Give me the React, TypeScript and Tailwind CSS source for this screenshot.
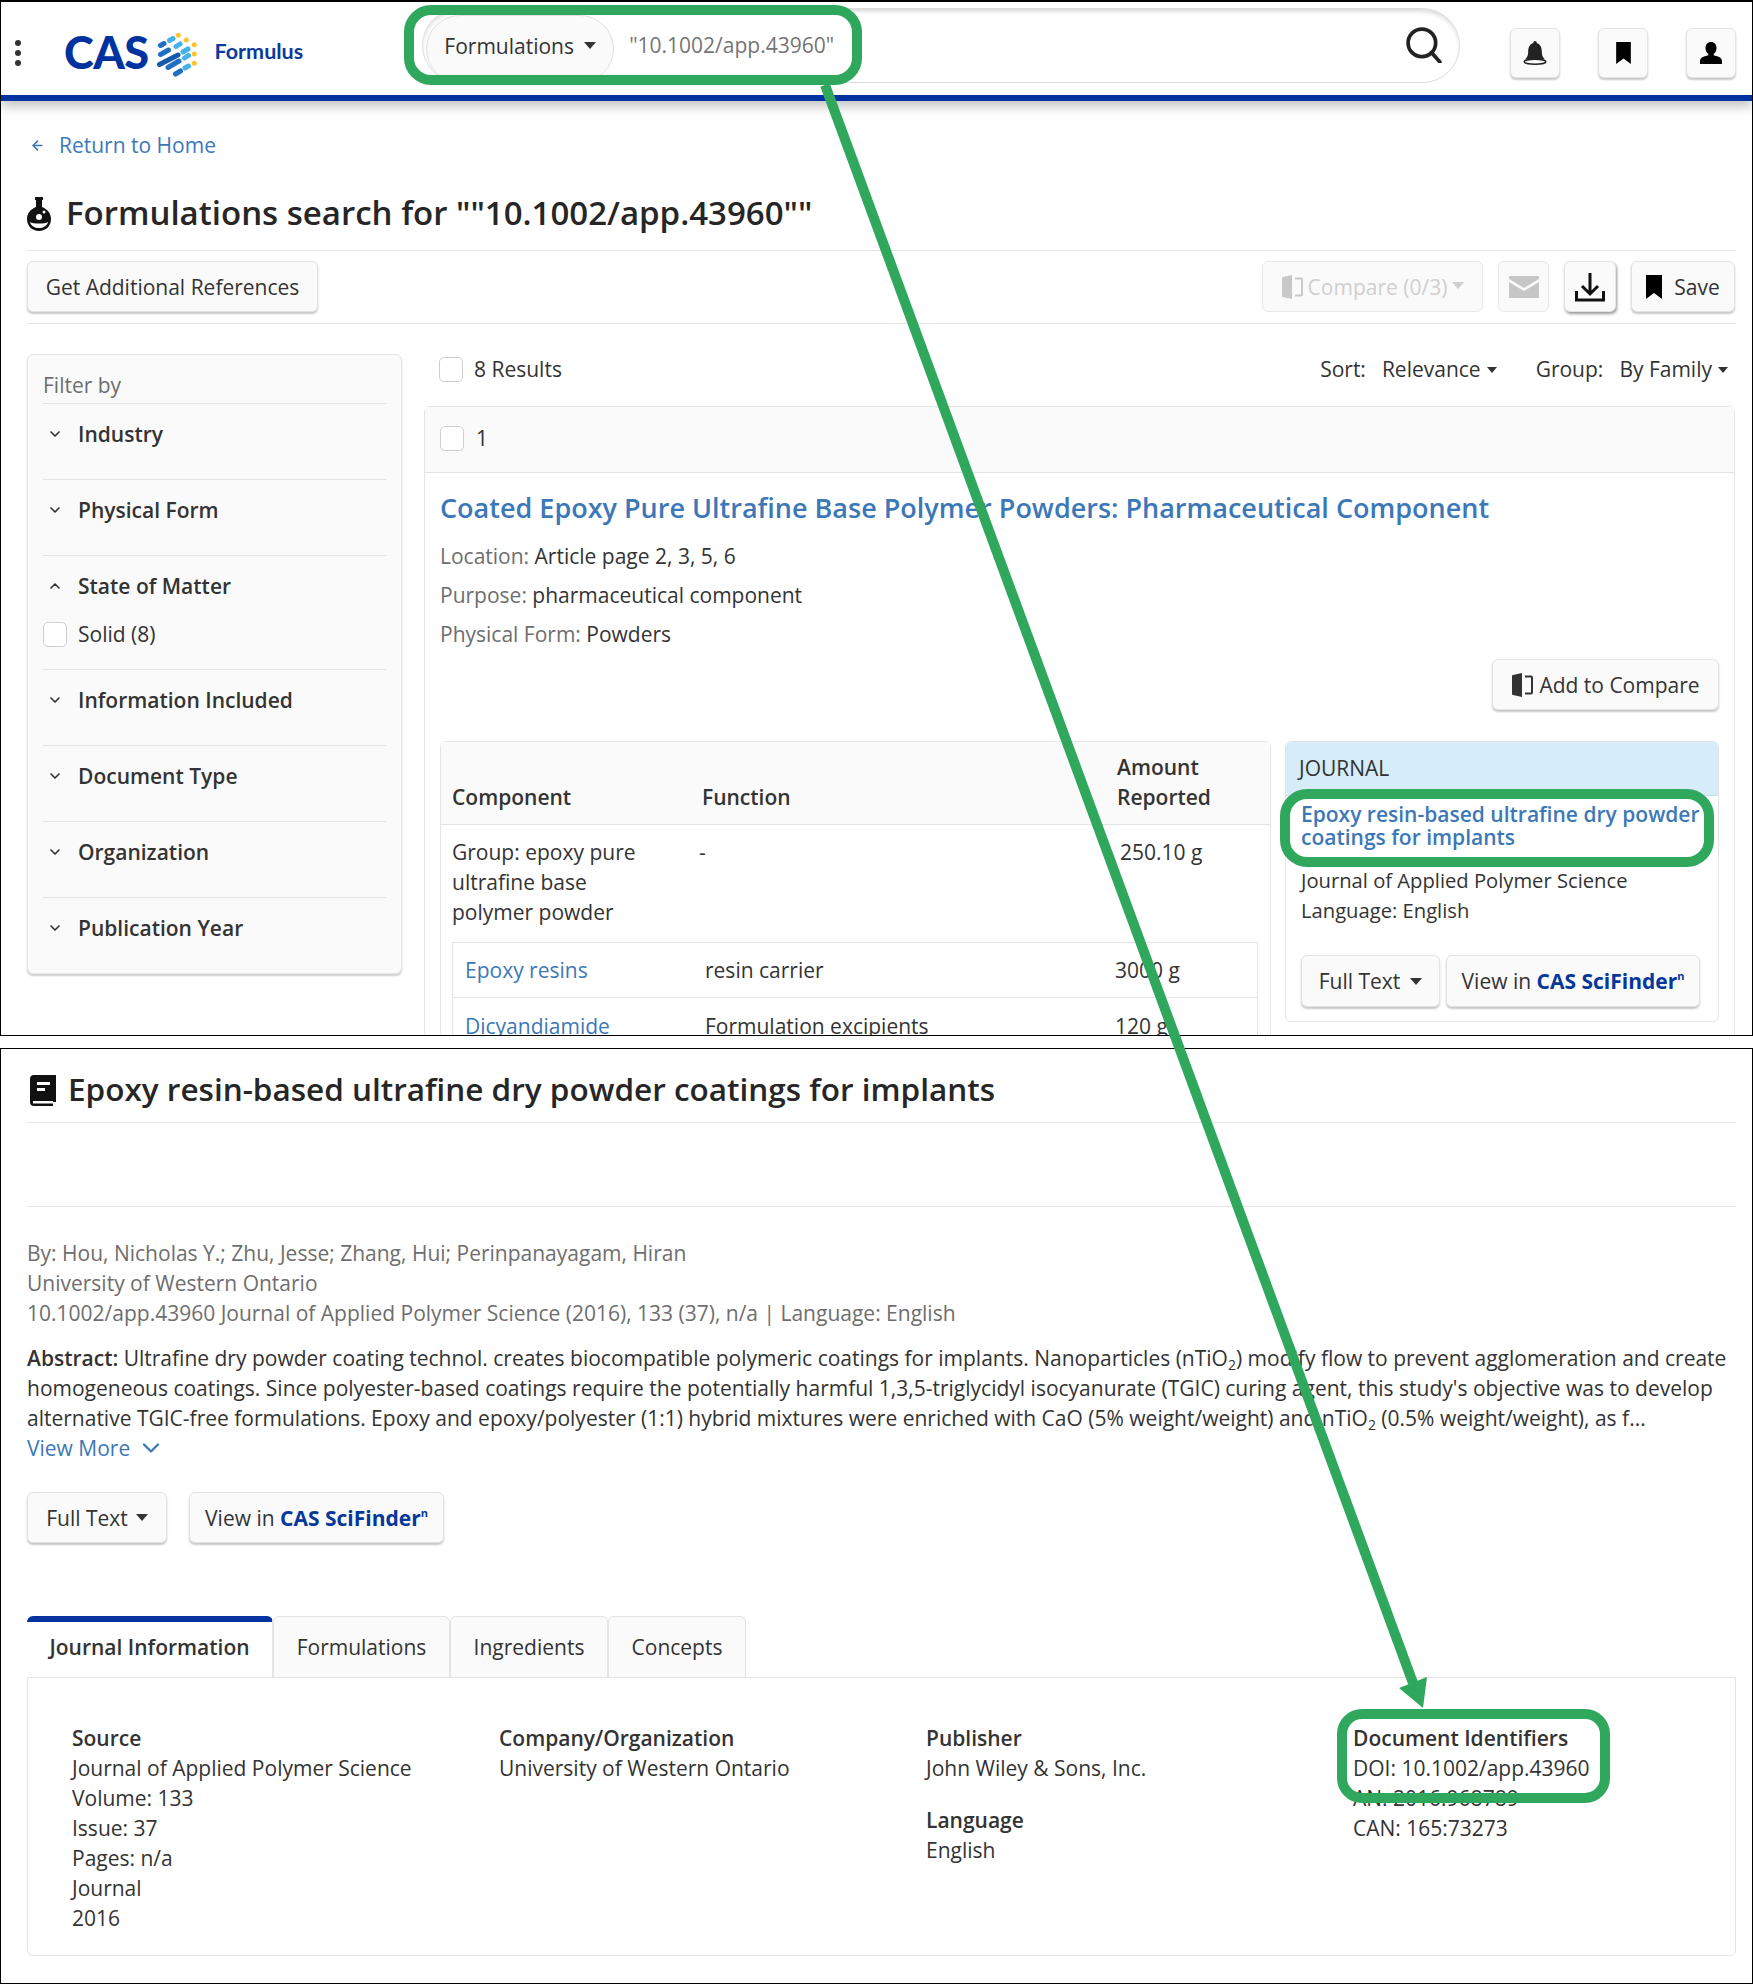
import { ArrowLeft, ChevronDown, ChevronUp } from "lucide-react";
import type { ReactNode } from "react";

const btn =
  "flex items-center justify-center rounded-[6px] border border-[#e3e3e3] bg-[#fafafa] shadow-[0_2px_2px_rgba(0,0,0,0.22)]";

function Caret({ className = "" }: { className?: string }) {
  return (
    <svg viewBox="0 0 12 7" className={`h-[7px] w-[12px] fill-current ${className}`}>
      <path d="M0 0h12L6 7z" />
    </svg>
  );
}

function Check({ className = "" }: { className?: string }) {
  return <span className={`block h-[25px] w-[24px] rounded-[5px] border border-[#cfcfcf] bg-white ${className}`} />;
}

function BookmarkIcon({ className = "" }: { className?: string }) {
  return (
    <svg viewBox="0 0 16 24" className={`fill-black ${className}`}>
      <path d="M0 0h16v24l-8-6-8 6z" />
    </svg>
  );
}

function CompareIcon({ className = "" }: { className?: string }) {
  return (
    <svg viewBox="0 0 24 24" className={`fill-current ${className}`}>
      <path d="M11 0v24L2 22a1 1 0 0 1-1-1V3a1 1 0 0 1 1-1z" />
      <path d="M14 2.5h6a2 2 0 0 1 2 2v15a2 2 0 0 1-2 2h-6v-2h6v-15h-6z" />
    </svg>
  );
}

function ScifinderButton({ className }: { className: string }) {
  return (
    <div className={`${btn} ${className}`}>
      View in&nbsp;<b className="font-bold text-[#06379a]">CAS SciFinder</b>
      <sup className="text-[11px] leading-none font-bold text-[#06379a]">n</sup>
    </div>
  );
}

function FilterRow({ title, open, last, children }: { title: string; open?: boolean; last?: boolean; children?: ReactNode }) {
  const Icon = open ? ChevronUp : ChevronDown;
  return (
    <div className={`${children ? "h-[114px]" : "h-[76px]"} ${last ? "" : "border-b border-[#e4e4e4]"} pt-[15px]`}>
      <div className="flex items-center font-semibold">
        <Icon className="ml-[4px] mr-[15px] h-[16px] w-[16px]" strokeWidth={2.5} />
        {title}
      </div>
      {children}
    </div>
  );
}

function CasMark() {
  const dark = "#1f6fc4";
  const light = "#45b3e7";
  const yellow = "#fdc32d";
  return (
    <svg viewBox="0 0 56 56" className="h-[56px] w-[56px]" strokeLinecap="round" strokeWidth={5} fill="none">
      <path d="M9.5 19.5l3.5-2" stroke={dark} />
      <path d="M18.5 14.5l3.5-2" stroke={light} />
      <path d="M9.5 28.5l8-4.5" stroke={dark} />
      <path d="M25 20.5l4-2.5" stroke={light} />
      <path d="M8.5 38.5L27 29" stroke="#1559ad" />
      <path d="M32 26l5-3" stroke={light} />
      <path d="M17 41.5l11-6.5" stroke={dark} />
      <path d="M33.5 32l4-2.5" stroke={light} />
      <path d="M24.5 48l5-3" stroke={dark} />
      <path d="M34 42l3.5-2" stroke={light} />
      <g fill={yellow} stroke="none">
        <circle cx="27.3" cy="9.3" r="2.5" />
        <circle cx="35.3" cy="14" r="2.5" />
        <circle cx="43.3" cy="18.7" r="2.5" />
        <circle cx="43.3" cy="28" r="2.5" />
        <circle cx="43.3" cy="37.3" r="2.5" />
      </g>
    </svg>
  );
}

function Annotations() {
  return (
    <svg
      viewBox="0 0 1753 1984"
      className="pointer-events-none absolute top-0 left-0 h-[1984px] w-[1753px]"
      fill="none"
      stroke="#2fa75c"
      strokeWidth={10}
    >
      <rect x="409" y="10" width="448" height="70" rx="22" />
      <rect x="1285" y="794" width="424" height="68" rx="22" />
      <rect x="1342" y="1714" width="263" height="84" rx="20" />
      <path d="M825 85L1413 1683" />
      <path d="M1399 1688L1427 1677L1423 1708z" fill="#2fa75c" stroke="none" />
    </svg>
  );
}

function Header() {
  return (
    <header className="flex h-[99px] border-b-[6px] border-[#0033a0] shadow-[0_6px_10px_rgba(0,0,0,0.22)]">
      <div className="ml-[14px] mt-[38px] flex w-[6px] flex-col gap-[4px]">
        <span className="h-[6px] w-[6px] rounded-full bg-[#333]" />
        <span className="h-[6px] w-[6px] rounded-full bg-[#333]" />
        <span className="h-[6px] w-[6px] rounded-full bg-[#333]" />
      </div>
      <div className="ml-[43px] flex h-[93px] items-center">
        <span className="font-['Lato',sans-serif] text-[45px] leading-none font-black tracking-[-0.5px] text-[#0033a0] pt-[8px]">CAS</span>
        <div className="ml-[2px] mt-[10px]"><CasMark /></div>
        <span className="ml-[8px] mt-[5px] font-['Lato',sans-serif] text-[21.500px] font-bold text-[#0a3a9e]">Formulus</span>
      </div>
      <div className="ml-[119px] mt-[6px] flex h-[75px] w-[1038px] items-center rounded-full border border-[#dcdcdc] pl-[3px] shadow-[inset_0_4px_5px_-2px_rgba(0,0,0,0.18)]">
        <div className="flex h-[68px] w-[188px] mt-[7px] items-center justify-center gap-[10px] rounded-full border border-[#e0e0e0] bg-[#fafafa] pb-[7px]">
          Formulations <Caret />
        </div>
        <span className="ml-[15px] pb-[1px] text-[#757575]">"10.1002/app.43960"</span>
        <svg viewBox="0 0 34 34" className="ml-auto mr-[17px] mb-[2px] h-[36px] w-[36px]" fill="none" stroke="#222" strokeWidth={3.5}>
          <circle cx="15" cy="15" r="13" />
          <path d="M24 24l8 9" strokeLinecap="round" />
        </svg>
      </div>
      <div className="ml-[50px] mt-[26px] flex gap-[38px]">
        <div className={`${btn} h-[50px] w-[50px]`}>
          <svg viewBox="0 0 24 24" className="h-[26px] w-[26px]">
            <path fill="#222" d="M12 1a1.6 1.6 0 0 1 1.6 1.8C17 4 18.3 7 18.3 11c0 3 1 5 2.7 6.8H3c1.700-1.800 2.700-3.800 2.700-6.800 0-4 1.300-7 4.700-8.200A1.600 1.600 0 0 1 12 1z" />
            <ellipse cx="12" cy="20" rx="10" ry="2.300" fill="none" stroke="#222" strokeWidth="1.400" />
          </svg>
        </div>
        <div className={`${btn} h-[50px] w-[50px]`}>
          <BookmarkIcon className="h-[22px] w-[15px]" />
        </div>
        <div className={`${btn} h-[50px] w-[50px]`}>
          <svg viewBox="0 0 24 24" className="h-[24px] w-[24px] fill-black">
            <path d="M12 1c3.400 0 5.500 2.600 5.500 6 0 2.600-1 4.700-2.800 5.800v1.400c3.500 1 8.300 2 8.300 5.800v3H1v-3c0-3.800 4.800-4.800 8.300-5.800v-1.400C7.500 11.700 6.500 9.600 6.500 7 6.500 3.600 8.600 1 12 1z" />
          </svg>
        </div>
      </div>
    </header>
  );
}

function TopToolbar() {
  return (
    <div className="flex h-[73px] items-start justify-between border-b border-[#e4e4e4] pt-[10px]">
      <div className={`${btn} h-[51px] w-[291px]`}>Get Additional References</div>
      <div className="mr-px flex">
        <div className="flex h-[51px] w-[221px] items-center justify-center rounded-[6px] border border-[#e8e8e8] bg-[#fafafa] text-[#cfcfcf]">
          <CompareIcon className="mr-[3px] h-[24px] w-[24px] text-[#c8c8c8]" />
          <span>Compare (0/3)</span>
          <Caret className="ml-[5px] mb-[2px]" />
        </div>
        <div className="ml-[15px] flex h-[51px] w-[51px] items-center justify-center rounded-[6px] border border-[#e8e8e8] bg-[#fafafa]">
          <svg viewBox="0 0 30 22" className="h-[22px] w-[30px]">
            <path fill="#c6c6c6" d="M1 0h28a1 1 0 0 1 1 1v2L15 12 0 3V1a1 1 0 0 1 1-1z" />
            <path fill="#c6c6c6" d="M0 6l15 9 15-9v15a1 1 0 0 1-1 1H1a1 1 0 0 1-1-1z" />
          </svg>
        </div>
        <div className={`${btn} ml-[15px] h-[51px] w-[52px] shadow-[1px_2px_3px_rgba(0,0,0,0.4)]`}>
          <svg viewBox="0 0 30 30" className="h-[30px] w-[30px]" fill="none" stroke="#111" strokeWidth={3}>
            <path d="M15 1v21M7 14l8 8 8-8" />
            <path d="M1.500 19v9h27v-9" />
          </svg>
        </div>
        <div className={`${btn} ml-[15px] h-[51px] w-[104px] gap-[12px]`}>
          <BookmarkIcon className="h-[24px] w-[16px]" />
          Save
        </div>
      </div>
    </div>
  );
}

function Filters() {
  return (
    <aside className="h-[620px] w-[375px] shrink-0 rounded-[6px] border border-[#e6e6e6] bg-[#fafafa] px-[15px] pt-[15px] shadow-[0_2px_2px_rgba(0,0,0,0.2)]">
      <div className="h-[34px] border-b border-[#e4e4e4] text-[#6e6e6e]">Filter by</div>
      <FilterRow title="Industry" />
      <FilterRow title="Physical Form" />
      <FilterRow title="State of Matter" open>
        <div className="mt-[18px] flex items-center gap-[11px]">
          <Check />
          Solid (8)
        </div>
      </FilterRow>
      <FilterRow title="Information Included" />
      <FilterRow title="Document Type" />
      <FilterRow title="Organization" />
      <FilterRow title="Publication Year" last />
    </aside>
  );
}

function ComponentTable() {
  return (
    <div className="h-[320px] w-[831px] shrink-0 rounded-t-[6px] border border-[#e6e6e6] bg-white">
      <div className="grid h-[83px] grid-cols-[250px_415px_1fr] items-end border-b border-[#e4e4e4] bg-[#fafafa] pb-[12px] pl-[11px] font-semibold">
        <div>Component</div>
        <div>Function</div>
        <div>
          Amount
          <br />
          Reported
        </div>
      </div>
      <div className="grid grid-cols-[247px_421px_1fr] pl-[11px] pt-[12px]">
        <div>
          Group: epoxy pure
          <br />
          ultrafine base
          <br />
          polymer powder
        </div>
        <div>-</div>
        <div>250.10 g</div>
      </div>
      <div className="ml-[11px] mt-[15px] w-[806px] border border-[#e4e4e4]">
        <div className="grid h-[55px] grid-cols-[240px_410px_1fr] items-center border-b border-[#e4e4e4] pl-[12px]">
          <div className="text-[#3c78b8]">Epoxy resins</div>
          <div>resin carrier</div>
          <div>3000 g</div>
        </div>
        <div className="grid h-[55px] grid-cols-[240px_410px_1fr] items-center pl-[12px]">
          <div className="text-[#3c78b8]">Dicyandiamide</div>
          <div>Formulation excipients</div>
          <div>120 g</div>
        </div>
      </div>
    </div>
  );
}

function JournalCard() {
  return (
    <div className="ml-[14px] h-[281px] w-[434px] shrink-0 overflow-hidden rounded-[6px] border border-[#e4e4e4]">
      <div className="flex h-[54px] items-center border-b border-[#bfe2f5] bg-[#d6edf9] pb-[2px] pl-[13px]">JOURNAL</div>
      <div className="px-[15px] pt-[7px]">
        <div className="text-[#3c78b8] leading-[23px] font-semibold">
          Epoxy resin-based ultrafine dry powder
          <br />
          coatings for implants
        </div>
        <div className="mt-[16px] text-[20.200px]">Journal of Applied Polymer Science</div>
        <div className="text-[20.200px]">Language: English</div>
        <div className="mt-[30px] flex gap-[6px]">
          <div className={`${btn} h-[52px] w-[139px] gap-[10px]`}>
            Full Text <Caret />
          </div>
          <ScifinderButton className="h-[52px] w-[254px]" />
        </div>
      </div>
    </div>
  );
}

function ResultCard() {
  return (
    <div className="mt-[22px] h-[640px] rounded-t-[6px] border border-[#e6e6e6]">
      <div className="flex h-[66px] items-center gap-[12px] border-b border-[#e4e4e4] bg-[#fafafa] pl-[15px] pb-[3px]">
        <Check />1
      </div>
      <div className="pl-[15px] pr-[15px]">
        <h2 className="mt-[15px] text-[27px] leading-[40px] font-semibold text-[#3c78b8]">
          Coated Epoxy Pure Ultrafine Base Polymer Powders: Pharmaceutical Component
        </h2>
        <div className="mt-[13px] flex flex-col gap-[9px]">
          <div><span className="text-[#6e6e6e]">Location:</span> Article page 2, 3, 5, 6</div>
          <div><span className="text-[#6e6e6e]">Purpose:</span> pharmaceutical component</div>
          <div><span className="text-[#6e6e6e]">Physical Form:</span> Powders</div>
        </div>
        <div className="mt-[10px] flex justify-end">
          <div className={`${btn} h-[51px] w-[227px] gap-[4px]`}>
            <CompareIcon className="h-[24px] w-[24px]" />
            Add to Compare
          </div>
        </div>
        <div className="mt-[31px] flex">
          <ComponentTable />
          <JournalCard />
        </div>
      </div>
    </div>
  );
}

function SearchPanel() {
  return (
    <section className="h-[1036px] overflow-hidden border border-t-2 border-black">
      <Header />
      <div className="pl-[26px] pr-[16px]">
        <div className="mt-[29px] flex items-center text-[#3c78b8]">
          <ArrowLeft className="ml-[3px] mr-[14px] h-[15px] w-[15px]" strokeWidth={2.5} />
          Return to Home
        </div>
        <div className="mt-[27px] flex h-[64px] items-start border-b border-[#e4e4e4]">
          <svg viewBox="0 0 24 34" className="mt-[10px] h-[34px] w-[24px]">
            <path d="M8 0h8v3h-1v7c5 2 9 6 9 12 0 7-5 12-12 12S0 29 0 22c0-6 4-10 9-12V3H8z" fill="#111" />
            <circle cx="12" cy="20" r="3" fill="#fff" />
            <circle cx="17" cy="15" r="1.500" fill="#fff" />
            <path d="M3 25c3 2 15 2 18 0-1 4-5 6-9 6s-8-2-9-6z" fill="#fff" />
          </svg>
          <h1 className="ml-[15px] mt-[1px] text-[33px] leading-[50px] font-semibold text-[#262626]">
            Formulations search for ""10.1002/app.43960""
          </h1>
        </div>
        <TopToolbar />
        <div className="mt-[30px] flex">
          <Filters />
          <div className="ml-[22px] w-[1311px]">
            <div className="flex h-[30px] items-center justify-between pl-[15px] pr-[7px]">
              <div className="flex items-center gap-[11px]">
                <Check />8 Results
              </div>
              <div className="flex items-center">
                Sort:
                <span className="ml-[16px]">Relevance</span>
                <Caret className="ml-[6px] mt-[2px] !h-[6px] !w-[10px]" />
                <span className="ml-[39px]">Group:</span>
                <span className="ml-[16px]">By Family</span>
                <Caret className="ml-[6px] mt-[2px] !h-[6px] !w-[10px]" />
              </div>
            </div>
            <ResultCard />
          </div>
        </div>
      </div>
    </section>
  );
}

function InfoTabs() {
  const tabClass = "flex h-[61px] items-center justify-center rounded-t-[6px] border border-b-0 border-[#e4e4e4] bg-[#fafafa]";
  return (
    <>
      <div className="mt-[73px] flex items-end">
        <div className="flex h-[61px] w-[246px] items-center justify-center rounded-t-[6px] border-t-[6px] border-r border-[#e4e4e4] border-t-[#0033a0] pb-[6px] font-semibold">
          Journal Information
        </div>
        <div className={`${tabClass} w-[177px]`}>Formulations</div>
        <div className={`${tabClass} w-[158px]`}>Ingredients</div>
        <div className={`${tabClass} w-[138px]`}>Concepts</div>
      </div>
      <div className="grid h-[279px] grid-cols-[427px_427px_427px_1fr] rounded-b-[6px] border border-[#e4e4e4] pl-[44px] pt-[45px]">
        <div>
          <div className="font-semibold">Source</div>
          <div>Journal of Applied Polymer Science</div>
          <div>Volume: 133</div>
          <div>Issue: 37</div>
          <div>Pages: n/a</div>
          <div>Journal</div>
          <div>2016</div>
        </div>
        <div>
          <div className="font-semibold">Company/Organization</div>
          <div>University of Western Ontario</div>
        </div>
        <div>
          <div className="font-semibold">Publisher</div>
          <div>John Wiley &amp; Sons, Inc.</div>
          <div className="mt-[22px] font-semibold">Language</div>
          <div>English</div>
        </div>
        <div>
          <div className="font-semibold">Document Identifiers</div>
          <div>DOI: 10.1002/app.43960</div>
          <div>AN: 2016:968789</div>
          <div>CAN: 165:73273</div>
        </div>
      </div>
    </>
  );
}

function DetailPanel() {
  const tio2 = (
    <>
      nTiO<sub className="text-[14px] leading-none">2</sub>
    </>
  );
  return (
    <section className="mt-[12px] h-[936px] border border-black pl-[26px] pr-[16px]">
      <div className="flex h-[74px] items-start border-b border-[#e4e4e4] pt-[26px]">
        <svg viewBox="0 0 26 31" className="ml-[3px] h-[31px] w-[26px]">
          <path d="M4 0h22v27h-3v4H4a4 4 0 0 1-4-4V4a4 4 0 0 1 4-4z" fill="#111" />
          <path d="M3 26h20v2.500H3z" fill="#fff" />
          <path d="M7 7h13v3H7zM7 13h8v3H7z" fill="#fff" />
        </svg>
        <h1 className="ml-[12px] -mt-[11px] text-[31.500px] leading-[50px] font-semibold text-[#262626]">
          Epoxy resin-based ultrafine dry powder coatings for implants
        </h1>
      </div>
      <div className="h-[84px] border-b border-[#e4e4e4]" />
      <div className="mt-[31px] text-[#6e6e6e]">
        <div>By: Hou, Nicholas Y.; Zhu, Jesse; Zhang, Hui; Perinpanayagam, Hiran</div>
        <div>University of Western Ontario</div>
        <div>10.1002/app.43960 Journal of Applied Polymer Science (2016), 133 (37), n/a | Language: English</div>
      </div>
      <div className="mt-[15px]">
        <div>
          <b className="font-semibold">Abstract:</b> Ultrafine dry powder coating technol. creates biocompatible polymeric coatings for implants. Nanoparticles ({tio2}) modify flow to prevent agglomeration and create
        </div>
        <div>homogeneous coatings. Since polyester-based coatings require the potentially harmful 1,3,5-triglycidyl isocyanurate (TGIC) curing agent, this study's objective was to develop</div>
        <div>alternative TGIC-free formulations. Epoxy and epoxy/polyester (1:1) hybrid mixtures were enriched with CaO (5% weight/weight) and {tio2} (0.5% weight/weight), as f...</div>
        <div className="flex items-center gap-[7px] text-[#3c78b8]">
          View More <ChevronDown className="h-[28px] w-[28px]" strokeWidth={2} />
        </div>
      </div>
      <div className="mt-[29px] flex gap-[22px]">
        <div className={`${btn} h-[51px] w-[140px] gap-[8px]`}>
          Full Text <Caret />
        </div>
        <ScifinderButton className="h-[51px] w-[255px]" />
      </div>
      <InfoTabs />
    </section>
  );
}

export default function App() {
  return (
    <div className="relative h-[1984px] w-[1753px] overflow-hidden bg-white font-['Open_Sans',sans-serif] text-[21px] leading-[30px] text-[#333]">
      <SearchPanel />
      <DetailPanel />
      <Annotations />
    </div>
  );
}
